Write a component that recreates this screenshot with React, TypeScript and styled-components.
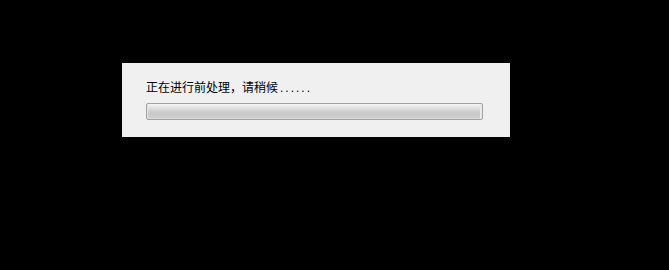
import React from 'react';
import styled, { createGlobalStyle } from 'styled-components';

const GlobalStyle = createGlobalStyle`
  html, body {
    margin: 0;
    padding: 0;
    background: #000000;
  }
`;

const Screen = styled.div`
  width: 669px;
  height: 270px;
  padding: 63px 0 0 122px;
  box-sizing: border-box;
  background: #000000;
`;

const Dialog = styled.div`
  width: 388px;
  height: 74px;
  box-sizing: border-box;
  background: #f0f0f0;
  padding: 16px 0 0 24px;
  display: flex;
  flex-direction: column;
  gap: 9px;
`;

const Message = styled.div`
  font-family: "Noto Sans CJK SC", "Liberation Sans", sans-serif;
  font-size: 12px;
  line-height: 15px;
  height: 15px;
  color: #000000;
  white-space: nowrap;
`;

const Dots = styled.span`
  font-family: "Liberation Sans", sans-serif;
  letter-spacing: 2px;
  margin-left: 2px;
`;

const Track = styled.div`
  width: 337px;
  height: 17px;
  box-sizing: border-box;
  border: 1px solid #a3a3a3;
  border-radius: 2px;
  background: linear-gradient(
    to bottom,
    #f4f4f4 0%,
    #e2e2e2 25%,
    #d3d3d3 45%,
    #c9c9c9 60%,
    #cccccc 85%,
    #d8d8d8 100%
  );
  box-shadow: inset 1px 0 0 #e6e6e6, inset -2px 0 0 #e9e9e9;
`;

export default function App() {
  return (
    <>
      <GlobalStyle />
      <Screen>
        <Dialog>
          <Message>
            正在进行前处理，请稍候<Dots>......</Dots>
          </Message>
          <Track />
        </Dialog>
      </Screen>
    </>
  );
}
